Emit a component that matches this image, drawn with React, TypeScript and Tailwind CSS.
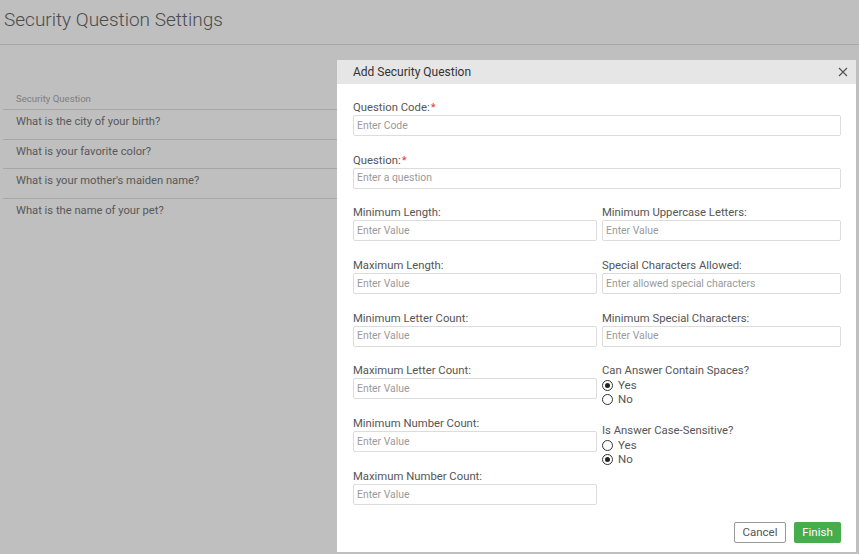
import React from "react";

const questions = [
  "What is the city of your birth?",
  "What is your favorite color?",
  "What is your mother's maiden name?",
  "What is the name of your pet?",
];

function Field({ label, placeholder, required }: { label: string; placeholder: string; required?: boolean }) {
  return (
    <div className="flex flex-col">
      <label className="text-[11.3px] leading-[14px] text-[#555]">
        {label}
        {required && <span className="ml-[1px] text-[#e53935]">*</span>}
      </label>
      <div className="flex h-[21px] items-center rounded-[2px] border border-[#dcdcdc] bg-white px-[3px] text-[10.4px] text-[#9a9a9a]">
        {placeholder}
      </div>
    </div>
  );
}

function Radio({ label, checked }: { label: string; checked?: boolean }) {
  return (
    <div className="flex h-[14px] items-center gap-[5px] text-[11.5px] leading-[14px] text-[#555]">
      <span className="flex h-[11px] w-[11px] items-center justify-center rounded-full border border-[#333] bg-white">
        {checked && <span className="h-[5px] w-[5px] rounded-full bg-[#222]" />}
      </span>
      {label}
    </div>
  );
}

function RadioGroup({ label, yes }: { label: string; yes: boolean }) {
  return (
    <div className="flex flex-col">
      <div className="text-[11.3px] leading-[14px] text-[#555]">{label}</div>
      <Radio label="Yes" checked={yes} />
      <Radio label="No" checked={!yes} />
    </div>
  );
}

export default function App() {
  return (
    <div className="relative h-[554px] w-[859px] overflow-hidden bg-white font-['Roboto',sans-serif]">
      <div className="flex h-[45px] items-center border-b border-[#dedede] pb-[3px] pl-[4px]">
        <h1 className="text-[19px] font-light text-[#666]">Security Question Settings</h1>
      </div>

      <div className="mx-[3px] mt-[47px]">
        <div className="border-b border-[#dedede] pb-[3px] pl-[13px] text-[9.6px] leading-[14px] text-[#aaa]">
          Security Question
        </div>
        {questions.map((q, i) => (
          <div
            key={q}
            className={`h-[29.5px] pl-[13px] pt-[4px] text-[11.2px] leading-[16px] text-[#777] ${
              i < questions.length - 1 ? "border-b border-[#dedede]" : ""
            }`}
          >
            {q}
          </div>
        ))}
      </div>

      <div className="absolute inset-0 bg-black/25" />

      <div className="absolute left-[337px] top-[60px] flex h-[492px] w-[519px] flex-col bg-white">
        <div className="flex h-[24px] items-center justify-between bg-[#e6e6e6] pl-[16px] pr-[8px]">
          <span className="text-[12px] text-[#333]">Add Security Question</span>
          <svg width="10" height="10" viewBox="0 0 10 10" className="text-[#555]">
            <path d="M1 1L9 9M9 1L1 9" stroke="currentColor" strokeWidth="1.2" />
          </svg>
        </div>

        <div className="flex flex-1 flex-col pl-[16px] pr-[15px] pt-[17px]">
          <div className="flex flex-col gap-y-[17.7px]">
            <Field label="Question Code:" placeholder="Enter Code" required />
            <Field label="Question:" placeholder="Enter a question" required />
          </div>

          <div className="mt-[17.7px] flex">
            <div className="flex w-[244px] flex-col gap-y-[17.7px]">
              <Field label="Minimum Length:" placeholder="Enter Value" />
              <Field label="Maximum Length:" placeholder="Enter Value" />
              <Field label="Minimum Letter Count:" placeholder="Enter Value" />
              <Field label="Maximum Letter Count:" placeholder="Enter Value" />
              <Field label="Minimum Number Count:" placeholder="Enter Value" />
              <Field label="Maximum Number Count:" placeholder="Enter Value" />
            </div>
            <div className="flex flex-1 flex-col gap-y-[17.7px] pl-[5px]">
              <Field label="Minimum Uppercase Letters:" placeholder="Enter Value" />
              <Field label="Special Characters Allowed:" placeholder="Enter allowed special characters" />
              <Field label="Minimum Special Characters:" placeholder="Enter Value" />
              <RadioGroup label="Can Answer Contain Spaces?" yes />
              <RadioGroup label="Is Answer Case-Sensitive?" yes={false} />
            </div>
          </div>

          <div className="mt-auto mb-[9px] flex justify-end gap-[8px]">
            <button
              type="button"
              className="h-[21px] w-[52px] rounded-[2px] border border-[#999] bg-white text-[11.5px] text-[#555]"
            >
              Cancel
            </button>
            <button
              type="button"
              className="h-[21px] w-[47px] rounded-[2px] bg-[#45ad4b] text-[11.5px] text-white"
            >
              Finish
            </button>
          </div>
        </div>
      </div>
    </div>
  );
}
